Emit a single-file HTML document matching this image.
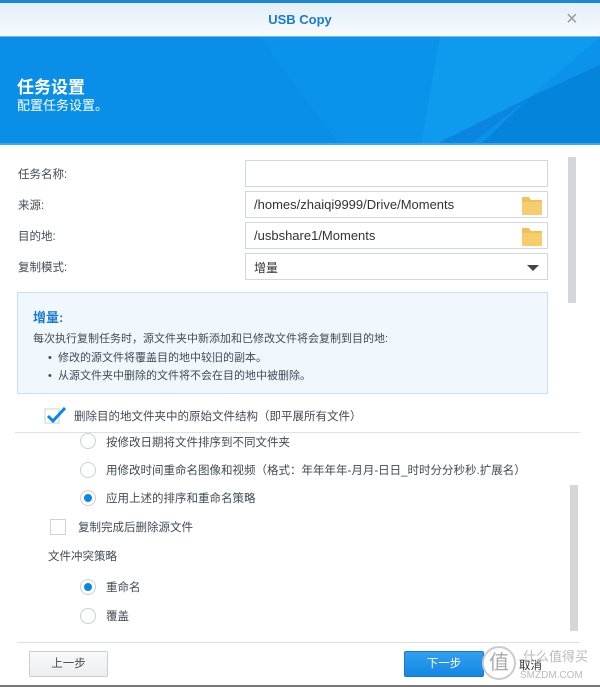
<!DOCTYPE html>
<html><head><meta charset="utf-8"><style>
*{margin:0;padding:0;box-sizing:border-box}
body{width:600px;height:687px;overflow:hidden;background:#fff;font-family:"Liberation Sans","Noto Sans CJK SC",sans-serif;font-size:11.5px;color:#414b55;position:relative}
.a{position:absolute}
.inp{position:absolute;left:245px;width:303px;height:27px;border:1px solid #d2d7dc;background:#fff;font-size:13px;padding:5px 8px;color:#333}
.lbl{position:absolute;left:18px;font-size:11.5px}
.radio{position:absolute;width:16px;height:16px;border-radius:50%;border:1px solid #c9d0d6;background:#fff}
.radio.on::after{content:"";position:absolute;left:3px;top:3px;width:8px;height:8px;border-radius:50%;background:#0a86e5}
.fold{position:absolute;right:4px;top:3px;width:22px;height:20px}
</style></head><body>
<div class="a" style="left:0;top:0;width:600px;height:3px;background:#1b88d6"></div>
<div class="a" style="left:0;top:3px;width:600px;height:34px;background:linear-gradient(#e2eef9,#f8fbfe);border-bottom:1px solid #7fb6e6"></div>
<div class="a" style="left:0;top:12px;width:600px;text-align:center;font-size:13px;font-weight:bold;color:#1a7ad0">USB Copy</div>
<div class="a" style="left:566px;top:8px;font-size:20px;color:#999">×</div>
<svg class="a" style="left:0;top:37px" width="600" height="108">
<rect width="600" height="108" fill="#0a8fe9"/>
<polygon points="260,0 600,0 600,108 340,108" fill="#0b93eb"/>
<polygon points="440,0 600,0 530,60 420,115" fill="#10a0ee" opacity=".6"/>
<polygon points="530,60 600,28 600,108 480,108" fill="#0584dc"/>
<polygon points="420,115 530,60 470,108" fill="#0a86e0"/>
<rect y="106" width="600" height="2" fill="#3fa9ef"/>
</svg>
<div class="a" style="left:17px;top:73px;font-size:17px;font-weight:bold;color:#fff">任务设置</div>
<div class="a" style="left:17px;top:95px;font-size:13px;color:#fff">配置任务设置。</div>

<div class="lbl" style="top:166px">任务名称:</div>
<div class="lbl" style="top:197px">来源:</div>
<div class="lbl" style="top:228px">目的地:</div>
<div class="lbl" style="top:259px">复制模式:</div>
<div class="inp" style="top:160px"></div>
<div class="inp" style="top:191px">/homes/zhaiqi9999/Drive/Moments<svg class="fold" viewBox="0 0 22 20"><path d="M1 2h7l2 3h11v15H1z" fill="#f0c05a"/><path d="M1 7h20v13H1z" fill="#f5cc6e"/></svg></div>
<div class="inp" style="top:222px">/usbshare1/Moments<svg class="fold" viewBox="0 0 22 20"><path d="M1 2h7l2 3h11v15H1z" fill="#f0c05a"/><path d="M1 7h20v13H1z" fill="#f5cc6e"/></svg></div>
<div class="inp" style="top:253px;font-size:12px">增量<div class="a" style="right:8px;top:11px;border:6px solid transparent;border-top:6px solid #444;border-bottom:0"></div></div>
<div class="a" style="left:568px;top:157px;width:8px;height:146px;background:#d4d7da"></div>

<div class="a" style="left:17px;top:292px;width:531px;height:102px;background:#f0f8fe;border:1px solid #c6e0f5"></div>
<div class="a" style="left:33px;top:307px;font-size:13px;font-weight:bold;color:#1a7ad0">增量:</div>
<div class="a" style="left:33px;top:330px;font-size:11px">每次执行复制任务时，源文件夹中新添加和已修改文件将会复制到目的地:</div>
<div class="a" style="left:48px;top:349px;font-size:11px">•&nbsp; 修改的源文件将覆盖目的地中较旧的副本。</div>
<div class="a" style="left:48px;top:367px;font-size:11px">•&nbsp; 从源文件夹中删除的文件将不会在目的地中被删除。</div>

<svg class="a" style="left:44px;top:405px" width="24" height="20"><rect x="1" y="4" width="14" height="14" fill="#fff" stroke="#ccd" /><path d="M4 11l5 5L21 3" stroke="#0a86e5" stroke-width="3" fill="none"/></svg>
<div class="a" style="left:74px;top:408px">删除目的地文件夹中的原始文件结构（即平展所有文件）</div>
<div class="a" style="left:15px;top:432px;width:565px;height:1px;background:#dde1e5"></div>
<div class="radio" style="left:80px;top:433px"></div><div class="a" style="left:106px;top:434px">按修改日期将文件排序到不同文件夹</div>
<div class="radio" style="left:80px;top:462px"></div><div class="a" style="left:106px;top:462px">用修改时间重命名图像和视频（格式：年年年年-月月-日日_时时分分秒秒.扩展名）</div>
<div class="radio on" style="left:80px;top:490px"></div><div class="a" style="left:106px;top:490px">应用上述的排序和重命名策略</div>
<div class="a" style="left:50px;top:519px;width:16px;height:16px;border:1px solid #ccd2d8"></div><div class="a" style="left:78px;top:519px">复制完成后删除源文件</div>
<div class="a" style="left:48px;top:548px">文件冲突策略</div>
<div class="radio on" style="left:80px;top:579px"></div><div class="a" style="left:106px;top:579px">重命名</div>
<div class="radio" style="left:80px;top:608px"></div><div class="a" style="left:106px;top:608px">覆盖</div>
<div class="a" style="left:570px;top:485px;width:8px;height:146px;background:#d4d7da"></div>
<div class="a" style="left:17px;top:642px;width:563px;height:1px;background:#dde1e5"></div>

<div class="a" style="left:29px;top:651px;width:79px;height:26px;border:1px solid #c8ced4;border-radius:2px;background:linear-gradient(#f8f9fa,#eceef0);text-align:center;line-height:24px">上一步</div>
<div class="a" style="left:404px;top:651px;width:80px;height:26px;border:1px solid #1b79cc;border-radius:2px;background:linear-gradient(#32a0f0,#1488e3);color:#fff;text-align:center;line-height:24px">下一步</div>
<div class="a" style="left:482px;top:646px;width:34px;height:34px;border-radius:50%;border:2px solid #ccc;background:rgba(255,255,255,.8);text-align:center;line-height:30px;font-size:20px;color:#aaa">值</div>
<div class="a" style="left:519px;top:657px;color:#333">取消</div>
<div class="a" style="left:523px;top:646px;font-size:13px;color:#bbb">什么值得买</div>
<div class="a" style="left:520px;top:670px;font-size:10px;color:#bbb">SMZDM.COM</div>
<div class="a" style="left:0;top:685px;width:600px;height:2px;background:#777"></div>
</body></html>
